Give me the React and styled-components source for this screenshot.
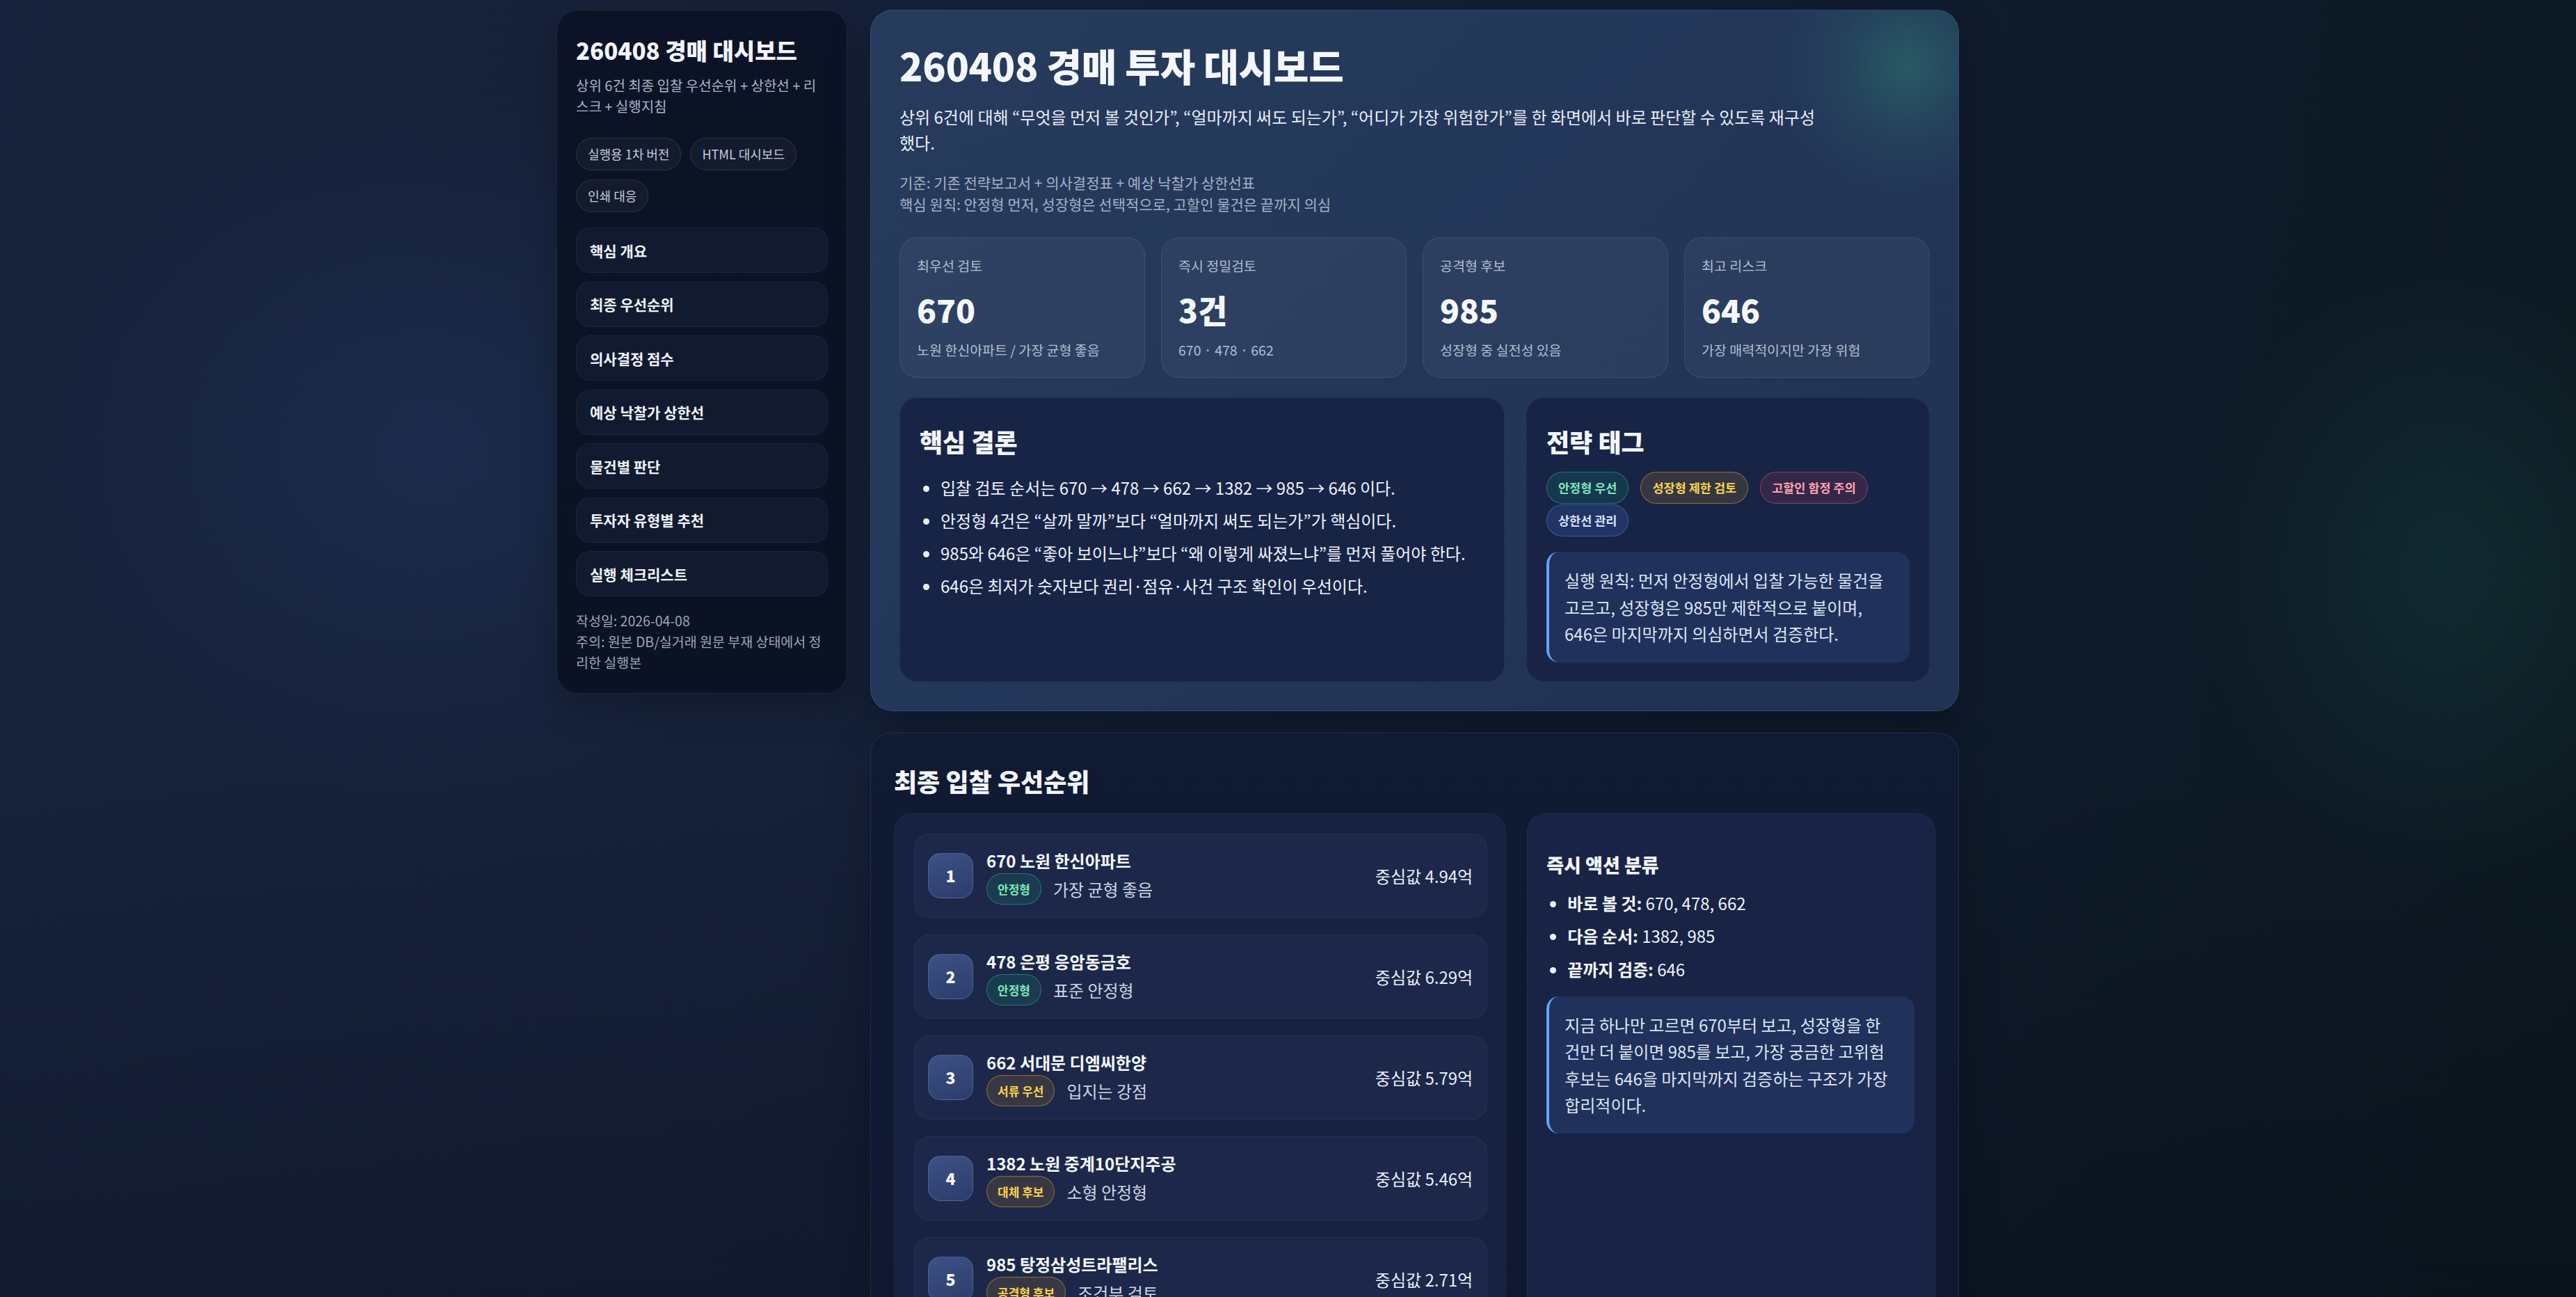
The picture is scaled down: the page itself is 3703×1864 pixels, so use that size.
import React from "react";
import styled, { createGlobalStyle } from "styled-components";

const GlobalStyle = createGlobalStyle`
  html, body { margin: 0; padding: 0; }
  body {
    min-height: 100vh;
    font-family: "Noto Sans CJK KR", "Noto Sans", sans-serif;
    color: #e2e8f0;
    background:
      linear-gradient(180deg, rgba(0,0,0,0) 55%, rgba(4,8,20,0.35) 100%),
      radial-gradient(ellipse 520px 640px at 3520px 820px, rgba(24,78,74,0.32), transparent 70%),
      radial-gradient(ellipse 820px 720px at 620px 650px, rgba(36,58,106,0.38), transparent 70%),
      linear-gradient(100deg, #17233c 0%, #162139 32%, #121d33 58%, #0e1a27 82%, #0c1920 100%);
  }
  * { box-sizing: border-box; }
`;

const Page = styled.div`
  padding: 14px 0 40px;
`;

const Shell = styled.div`
  max-width: 2103px;
  margin: 0 auto;
  display: grid;
  grid-template-columns: 418px minmax(0, 1565px);
  column-gap: 33px;
  align-items: start;
`;

/* ---------- Sidebar ---------- */
const Sidebar = styled.aside`
  padding: 35px 27px 29px;
  border-radius: 30px;
  background: linear-gradient(180deg, #0c1326 0%, #0b1224 100%);
  border: 1px solid rgba(120, 145, 200, 0.16);
  box-shadow: 0 20px 50px rgba(0, 0, 0, 0.25);
`;

const SideTitle = styled.h1`
  margin: 0;
  font-size: 33px;
  line-height: 44px;
  font-weight: 800;
  color: #f3f6ff;
`;

const SideDesc = styled.p`
  margin: 14px 0 0;
  font-size: 20px;
  line-height: 30px;
  color: #aab5c8;
`;

const ChipWrap = styled.div`
  margin-top: 30px;
  display: flex;
  flex-wrap: wrap;
  gap: 13px;
`;

const Chip = styled.span`
  display: inline-block;
  padding: 10px 16px;
  font-size: 18px;
  line-height: 25px;
  color: #c3cddd;
  background: rgba(255, 255, 255, 0.035);
  border: 1px solid rgba(148, 163, 184, 0.18);
  border-radius: 999px;
`;

const Nav = styled.nav`
  margin-top: 22px;
  display: flex;
  flex-direction: column;
  gap: 12.5px;
`;

const NavItem = styled.a`
  height: 65px;
  display: flex;
  align-items: center;
  padding: 0 19px;
  border-radius: 20px;
  background: #111a2f;
  border: 1px solid rgba(148, 163, 184, 0.09);
  font-size: 21px;
  font-weight: 700;
  color: #eef2fa;
  text-decoration: none;
`;

const SideFoot = styled.div`
  margin-top: 20px;
  font-size: 19.5px;
  line-height: 30px;
  color: #9aa6ba;
`;

/* ---------- Main ---------- */
const Main = styled.main`
  display: flex;
  flex-direction: column;
  gap: 31px;
  min-width: 0;
`;

const Hero = styled.section`
  padding: 46px 41px 41px;
  border-radius: 32px;
  border: 1px solid rgba(130, 160, 210, 0.18);
  background:
    radial-gradient(circle 190px at 1490px 80px, rgba(48, 140, 118, 0.42), rgba(48, 140, 118, 0.12) 55%, transparent 100%),
    linear-gradient(135deg, #273b5c 0%, #23375a 45%, #213252 100%);
  box-shadow: 0 24px 60px rgba(0, 0, 0, 0.28);
`;

const HeroTitle = styled.h1`
  margin: 0;
  font-size: 55px;
  line-height: 64px;
  font-weight: 800;
  color: #f4f7ff;
  letter-spacing: -0.3px;
`;

const Lead = styled.p`
  margin: 24px 0 0;
  max-width: 1325px;
  font-size: 24px;
  line-height: 37px;
  color: #e9eef8;
`;

const Meta = styled.div`
  margin-top: 24px;
  font-size: 21px;
  line-height: 31px;
  color: #a5b1c6;
`;

const KpiGrid = styled.div`
  margin-top: 32px;
  display: grid;
  grid-template-columns: repeat(4, 1fr);
  gap: 23px;
`;

const KpiCard = styled.div`
  padding: 27px 24px 26px;
  border-radius: 26px;
  background: rgba(255, 255, 255, 0.045);
  border: 1px solid rgba(180, 200, 235, 0.12);
`;

const KpiLabel = styled.div`
  font-size: 19.5px;
  line-height: 26px;
  color: #b3bed1;
`;

const KpiValue = styled.div`
  margin-top: 22px;
  font-size: 46px;
  line-height: 55px;
  font-weight: 800;
  color: #f5f8ff;
`;

const KpiSub = styled.div`
  margin-top: 18px;
  font-size: 19.5px;
  line-height: 26px;
  color: #b3bed1;
`;

const Split = styled.div`
  margin-top: 28px;
  display: grid;
  grid-template-columns: 1.5fr 1fr;
  gap: 31px;
`;

const Card = styled.div`
  padding: 40px 28px 27px;
  border-radius: 26px;
  background: #182446;
  border: 1px solid rgba(140, 165, 220, 0.08);
`;

const CardTitle = styled.h2`
  margin: 0;
  font-size: 36px;
  line-height: 44px;
  font-weight: 800;
  color: #f3f6ff;
`;

const BulletList = styled.ul`
  margin: ${(p) => p.$top ?? 27}px 0 0;
  padding-left: 30px;
  li {
    font-size: 24px;
    line-height: 36px;
    color: #eef2fa;
  }
  li + li {
    margin-top: ${(p) => p.$gap ?? 11}px;
  }
  b {
    font-weight: 700;
    color: #f5f8ff;
  }
`;

const TagRow = styled.div`
  margin-top: 22px;
  display: flex;
  flex-wrap: wrap;
  column-gap: 17px;
  row-gap: 1px;
`;

const tones = {
  green: { c: "#7ee8b6", bg: "rgba(16, 185, 129, 0.14)", bd: "rgba(52, 211, 153, 0.42)" },
  amber: { c: "#fcd34d", bg: "rgba(245, 180, 40, 0.13)", bd: "rgba(234, 170, 40, 0.5)" },
  red: { c: "#fda4af", bg: "rgba(244, 63, 94, 0.13)", bd: "rgba(244, 100, 120, 0.45)" },
  blue: { c: "#d6e2fb", bg: "rgba(70, 120, 220, 0.2)", bd: "rgba(96, 140, 230, 0.45)" },
};

const Tag = styled.span`
  display: inline-block;
  padding: 9px 16px;
  font-size: 17.5px;
  line-height: 26px;
  font-weight: 700;
  border-radius: 999px;
  color: ${(p) => tones[p.$tone].c};
  background: ${(p) => tones[p.$tone].bg};
  border: 1px solid ${(p) => tones[p.$tone].bd};
`;

const Quote = styled.div`
  margin-top: ${(p) => p.$top ?? 22}px;
  padding: 22px ${(p) => p.$right ?? 22}px 21px 22px;
  border-left: 4px solid #60a5fa;
  border-radius: 18px;
  background: rgba(45, 70, 125, 0.42);
  font-size: 24px;
  line-height: 38.5px;
  color: #dde6f4;
`;

/* ---------- Lower panel ---------- */
const Panel = styled.section`
  padding: 46px 33px 33px;
  border-radius: 30px;
  border: 1px solid rgba(90, 120, 190, 0.22);
  background: linear-gradient(180deg, #101a33 0%, #0f1830 100%);
  box-shadow: 0 24px 60px rgba(0, 0, 0, 0.25);
`;

const SectionTitle = styled.h2`
  margin: 0;
  font-size: 36px;
  line-height: 44px;
  font-weight: 800;
  color: #f3f6ff;
`;

const LowerGrid = styled.div`
  margin-top: 25px;
  display: grid;
  grid-template-columns: 1.5fr 1fr;
  gap: 30px;
`;

const ListBox = styled.div`
  padding: 28px 26px 28px 28px;
  border-radius: 26px;
  background: #172142;
  border: 1px solid rgba(140, 165, 220, 0.07);
  display: flex;
  flex-direction: column;
  gap: 24px;
`;

const Item = styled.div`
  min-height: 121px;
  padding: 0 20px 0 19px;
  display: flex;
  align-items: center;
  gap: 19px;
  border-radius: 22px;
  background: #1c2749;
  border: 1px solid rgba(150, 175, 230, 0.08);
`;

const Rank = styled.div`
  flex: none;
  width: 65px;
  height: 65px;
  border-radius: 18px;
  display: flex;
  align-items: center;
  justify-content: center;
  font-size: 23px;
  font-weight: 800;
  color: #f5f8ff;
  background: linear-gradient(160deg, #3d5185 0%, #2c3c6c 100%);
  border: 1px solid rgba(140, 165, 230, 0.3);
`;

const ItemMain = styled.div`
  flex: 1;
  min-width: 0;
  display: flex;
  flex-direction: column;
  gap: 3px;
  padding-top: 4px;
`;

const ItemTitle = styled.div`
  font-size: 24px;
  line-height: 31px;
  font-weight: 700;
  color: #f5f8ff;
`;

const ItemSub = styled.div`
  display: flex;
  align-items: center;
  gap: 17px;
`;

const Pill = styled.span`
  padding: 8px 15px;
  font-size: 17px;
  line-height: 27px;
  font-weight: 700;
  border-radius: 999px;
  color: ${(p) => tones[p.$tone].c};
  background: ${(p) => tones[p.$tone].bg};
  border: 1px solid ${(p) => tones[p.$tone].bd};
`;

const ItemDesc = styled.span`
  font-size: 24px;
  line-height: 31px;
  color: #ccd5e3;
`;

const ItemValue = styled.div`
  flex: none;
  font-size: 24px;
  line-height: 31px;
  color: #e9eef8;
`;

const ActionCard = styled.div`
  padding: 55px 29px 28px 27px;
  border-radius: 26px;
  background: #182345;
  border: 1px solid rgba(140, 165, 220, 0.08);
`;

const ActionTitle = styled.h3`
  margin: 0;
  font-size: 27px;
  line-height: 35px;
  font-weight: 800;
  color: #f3f6ff;
`;

const navItems = [
  "핵심 개요",
  "최종 우선순위",
  "의사결정 점수",
  "예상 낙찰가 상한선",
  "물건별 판단",
  "투자자 유형별 추천",
  "실행 체크리스트",
];

const kpis = [
  { label: "최우선 검토", value: "670", sub: "노원 한신아파트 / 가장 균형 좋음" },
  { label: "즉시 정밀검토", value: "3건", sub: "670 · 478 · 662" },
  { label: "공격형 후보", value: "985", sub: "성장형 중 실전성 있음" },
  { label: "최고 리스크", value: "646", sub: "가장 매력적이지만 가장 위험" },
];

const priorities = [
  { rank: 1, title: "670 노원 한신아파트", tag: "안정형", tone: "green", desc: "가장 균형 좋음", value: "중심값 4.94억" },
  { rank: 2, title: "478 은평 응암동금호", tag: "안정형", tone: "green", desc: "표준 안정형", value: "중심값 6.29억" },
  { rank: 3, title: "662 서대문 디엠씨한양", tag: "서류 우선", tone: "amber", desc: "입지는 강점", value: "중심값 5.79억" },
  { rank: 4, title: "1382 노원 중계10단지주공", tag: "대체 후보", tone: "amber", desc: "소형 안정형", value: "중심값 5.46억" },
  { rank: 5, title: "985 탕정삼성트라팰리스", tag: "공격형 후보", tone: "amber", desc: "조건부 검토", value: "중심값 2.71억" },
];

export default function App() {
  return (
    <>
      <GlobalStyle />
      <Page>
        <Shell>
          <Sidebar>
            <SideTitle>260408 경매 대시보드</SideTitle>
            <SideDesc>상위 6건 최종 입찰 우선순위 + 상한선 + 리스크 + 실행지침</SideDesc>
            <ChipWrap>
              <Chip>실행용 1차 버전</Chip>
              <Chip>HTML 대시보드</Chip>
              <Chip>인쇄 대응</Chip>
            </ChipWrap>
            <Nav>
              {navItems.map((n) => (
                <NavItem key={n} href="#">
                  {n}
                </NavItem>
              ))}
            </Nav>
            <SideFoot>
              작성일: 2026-04-08
              <br />
              주의: 원본 DB/실거래 원문 부재 상태에서 정리한 실행본
            </SideFoot>
          </Sidebar>

          <Main>
            <Hero>
              <HeroTitle>260408 경매 투자 대시보드</HeroTitle>
              <Lead>
                상위 6건에 대해 “무엇을 먼저 볼 것인가”, “얼마까지 써도 되는가”, “어디가 가장 위험한가”를 한 화면에서 바로 판단할 수 있도록 재구성했다.
              </Lead>
              <Meta>
                기준: 기존 전략보고서 + 의사결정표 + 예상 낙찰가 상한선표
                <br />
                핵심 원칙: 안정형 먼저, 성장형은 선택적으로, 고할인 물건은 끝까지 의심
              </Meta>
              <KpiGrid>
                {kpis.map((k) => (
                  <KpiCard key={k.label}>
                    <KpiLabel>{k.label}</KpiLabel>
                    <KpiValue>{k.value}</KpiValue>
                    <KpiSub>{k.sub}</KpiSub>
                  </KpiCard>
                ))}
              </KpiGrid>
              <Split>
                <Card>
                  <CardTitle>핵심 결론</CardTitle>
                  <BulletList>
                    <li>입찰 검토 순서는 670 → 478 → 662 → 1382 → 985 → 646 이다.</li>
                    <li>안정형 4건은 “살까 말까”보다 “얼마까지 써도 되는가”가 핵심이다.</li>
                    <li>985와 646은 “좋아 보이느냐”보다 “왜 이렇게 싸졌느냐”를 먼저 풀어야 한다.</li>
                    <li>646은 최저가 숫자보다 권리·점유·사건 구조 확인이 우선이다.</li>
                  </BulletList>
                </Card>
                <Card>
                  <CardTitle>전략 태그</CardTitle>
                  <TagRow>
                    <Tag $tone="green">안정형 우선</Tag>
                    <Tag $tone="amber">성장형 제한 검토</Tag>
                    <Tag $tone="red">고할인 함정 주의</Tag>
                    <Tag $tone="blue">상한선 관리</Tag>
                  </TagRow>
                  <Quote $right={30}>
                    실행 원칙: 먼저 안정형에서 입찰 가능한 물건을 고르고, 성장형은 985만 제한적으로 붙이며, 646은 마지막까지 의심하면서 검증한다.
                  </Quote>
                </Card>
              </Split>
            </Hero>

            <Panel>
              <SectionTitle>최종 입찰 우선순위</SectionTitle>
              <LowerGrid>
                <ListBox>
                  {priorities.map((p) => (
                    <Item key={p.rank}>
                      <Rank>{p.rank}</Rank>
                      <ItemMain>
                        <ItemTitle>{p.title}</ItemTitle>
                        <ItemSub>
                          <Pill $tone={p.tone}>{p.tag}</Pill>
                          <ItemDesc>{p.desc}</ItemDesc>
                        </ItemSub>
                      </ItemMain>
                      <ItemValue>{p.value}</ItemValue>
                    </Item>
                  ))}
                </ListBox>
                <ActionCard>
                  <ActionTitle>즉시 액션 분류</ActionTitle>
                  <BulletList $top={20} $gap={11.5}>
                    <li>
                      <b>바로 볼 것:</b> 670, 478, 662
                    </li>
                    <li>
                      <b>다음 순서:</b> 1382, 985
                    </li>
                    <li>
                      <b>끝까지 검증:</b> 646
                    </li>
                  </BulletList>
                  <Quote $top={21}>
                    지금 하나만 고르면 670부터 보고, 성장형을 한 건만 더 붙이면 985를 보고, 가장 궁금한 고위험 후보는 646을 마지막까지 검증하는 구조가 가장 합리적이다.
                  </Quote>
                </ActionCard>
              </LowerGrid>
            </Panel>
          </Main>
        </Shell>
      </Page>
    </>
  );
}
